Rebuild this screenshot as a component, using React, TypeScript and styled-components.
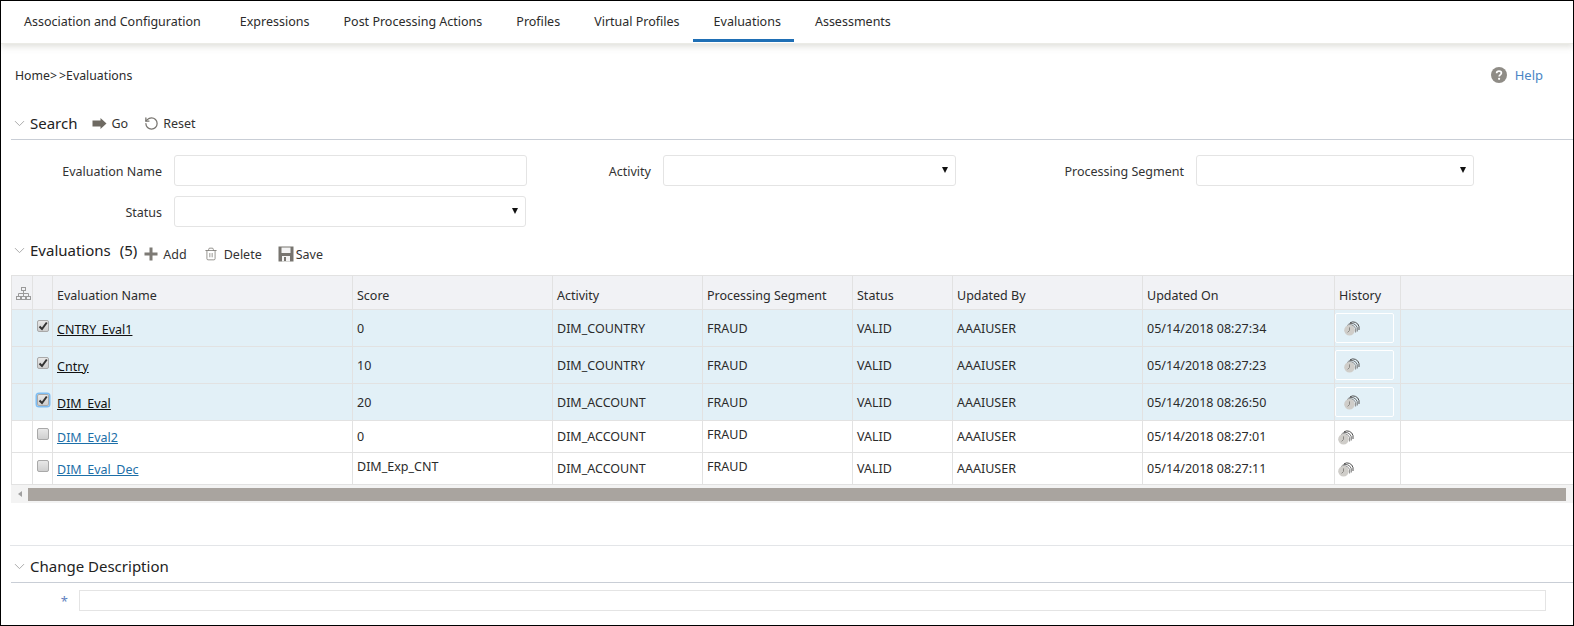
import React from "react";
import styled, { createGlobalStyle } from "styled-components";
import { ChevronDown, RotateCcw, Trash2 } from "lucide-react";

const Global = createGlobalStyle`
  html, body { margin: 0; padding: 0; background: #fff; }
  body { font-family: "Noto Sans", "Open Sans", Arial, sans-serif; color: #2b2b2b; }
  * { box-sizing: border-box; }
`;

const Frame = styled.div`
  width: 1574px;
  height: 626px;
  border: 1px solid #000;
  overflow: hidden;
  background: #fff;
`;
const Tabs = styled.nav`
  height: 43px;
  display: flex;
  padding-left: 2px;
  border-bottom: 1px solid #ebebe6;
  box-shadow: 0 3px 6px rgba(160, 160, 145, 0.3);
`;
const Tab = styled.a<{ $active?: boolean }>`
  height: 41px;
  padding: 12px 13px 0 21px;
  font-size: 12.5px;
  line-height: 17px;
  color: #2b2b2b;
  border-bottom: 3px solid ${(p) => (p.$active ? "#1f6fb5" : "transparent")};
  &:first-child { margin-right: 5px; }
`;
const Crumbs = styled.div`
  display: flex;
  justify-content: space-between;
  align-items: center;
  height: 22px;
  margin-top: 20px;
  padding: 0 30px 0 14px;
  font-size: 12.3px;
`;
const Help = styled.span`
  display: flex;
  align-items: center;
  gap: 8px;
  color: #4a86c5;
  font-size: 13px;
`;
const SectionHead = styled.div<{ $line?: boolean; $top: number; $h: number }>`
  display: flex;
  align-items: center;
  margin: ${(p) => p.$top}px 0 0 10px;
  height: ${(p) => p.$h}px;
  border-bottom: ${(p) => (p.$line ? "1px solid #c9ced6" : "0")};
  color: #8d8d8d;
  svg.chev { margin: 0 2px 0 0; flex: none; }
`;
const SectionTitle = styled.span`
  font-size: 15px;
  color: #222;
`;
const Count = styled.span`
  font-size: 15px;
  color: #222;
  margin-left: 9px;
`;
const Action = styled.span<{ $gap?: number; $left: number; $drop?: boolean }>`
  display: inline-flex;
  align-items: center;
  gap: ${(p) => p.$gap ?? 4}px;
  margin-left: ${(p) => p.$left}px;
  padding-top: ${(p) => (p.$drop ? 8 : 0)}px;
  font-size: 12.5px;
  color: #333;
`;
const FormGrid = styled.div`
  display: grid;
  grid-template-columns: 161px 353px 112px 293px 216px 278px;
  column-gap: 12px;
  row-gap: 10px;
  margin-top: 15px;
  align-items: center;
`;
const Label = styled.label`
  text-align: right;
  font-size: 12.5px;
  padding-top: 2px;
  color: #333;
`;
const TextBox = styled.div`
  height: 31px;
  border: 1px solid #e4e4e4;
  border-radius: 3px;
  background: #fff;
`;
const SelectBox = styled(TextBox)<{ $inset?: number }>`
  position: relative;
  margin-right: ${(p) => p.$inset ?? 0}px;
  &::after {
    content: "";
    position: absolute;
    right: 7px;
    top: 11px;
    border-left: 3px solid transparent;
    border-right: 3px solid transparent;
    border-top: 6px solid #111;
  }
`;
const TableWrap = styled.div`
  margin: 12px 0 0 10px;
`;
const Grid = styled.table`
  width: 1562px;
  table-layout: fixed;
  border-collapse: collapse;
  font-size: 12.5px;
  color: #2b2b2b;
  th, td { border: 1px solid #e2e2e2; padding: 0 4px; text-align: left; font-weight: 400; white-space: nowrap; }
  th { padding-top: 5px; }
  th:last-child, td:last-child { border-right: 0; }
`;
const HeadRow = styled.tr`
  height: 34px;
  background: #f1f2f5;
`;
const Row = styled.tr<{ $sel?: boolean; $h: number }>`
  height: ${(p) => p.$h}px;
  background: ${(p) => (p.$sel ? "#e2f0f7" : "#fff")};
  td { vertical-align: middle; }
`;
const LiftedCell = styled.td<{ $lift?: boolean }>`
  && { padding-bottom: ${(p) => (p.$lift ? 4 : 0)}px; }
`;
const NameLink = styled.a<{ $sel?: boolean }>`
  color: ${(p) => (p.$sel ? "#111" : "#1d6fa8")};
  text-decoration: underline;
  position: relative;
  top: 1px;
`;
const Check = styled.span<{ $focus?: boolean }>`
  display: flex;
  align-items: center;
  justify-content: center;
  width: 12px;
  height: 12px;
  margin: -5px 0 0 0;
  border: 1px solid #a9a9a9;
  border-radius: 2px;
  background: linear-gradient(#e8e8e8, #cfcfcf);
  box-shadow: ${(p) => (p.$focus ? "0 0 0 1.5px #7dbcf2" : "none")};
`;
const HistoryBtn = styled.span<{ $sel?: boolean }>`
  display: flex;
  align-items: center;
  width: 59px;
  height: 30px;
  margin-left: -4px;
  padding: ${(p) => (p.$sel ? "0 0 0 8px" : "2px 0 0 3px")};
  border: ${(p) => (p.$sel ? "1px solid #fff" : "0")};
  border-radius: 2px;
`;
const Scroller = styled.div`
  height: 18px;
  display: flex;
  align-items: center;
  background: #f3f3f3;
`;
const ArrowLeft = styled.span`
  width: 17px;
  display: flex;
  justify-content: center;
  &::before {
    content: "";
    border-top: 3px solid transparent;
    border-bottom: 3px solid transparent;
    border-right: 4px solid #a0a0a0;
  }
`;
const Thumb = styled.span`
  width: 1538px;
  height: 13px;
  background: #a9a49f;
`;
const Divider = styled.div`
  margin: 42px 0 0 9px;
  border-top: 1px solid #e3e5e8;
`;
const DescRow = styled.div`
  display: flex;
  align-items: center;
  margin-top: 7px;
  height: 21px;
`;
const Star = styled.span`
  width: 78px;
  padding-right: 11px;
  text-align: right;
  color: #5f7fc0;
  font-size: 13px;
`;
const DescInput = styled.div`
  width: 1467px;
  height: 21px;
  border: 1px solid #e4e4e4;
`;

const GoIcon = () => (
  <svg width="15" height="11" viewBox="0 0 15 11"><path d="M0.5 2.5H8.5V0L14.5 5.5 8.5 11V8.5H0.5Z" fill="#6e6a62" /></svg>
);
const PlusIcon = () => (
  <svg width="14" height="14" viewBox="0 0 14 14"><path d="M5.5 0.5h3v5h5v3h-5v5h-3v-5h-5v-3h5z" fill="#7d7a75" /></svg>
);
const SaveIcon = () => (
  <svg width="16" height="16" viewBox="0 0 16 16">
    <path d="M0.5 0.5H15.5V15.5H0.5Z" fill="#77746f" />
    <rect x="3.5" y="1.5" width="9" height="5.5" fill="#f4f4f4" />
    <rect x="4" y="10" width="8" height="5.5" fill="#f4f4f4" />
    <rect x="6" y="11" width="2" height="4" fill="#77746f" />
  </svg>
);
const TreeIcon = () => (
  <svg width="15" height="13" viewBox="0 0 15 13" fill="none" stroke="#9a9a9a" strokeWidth="1">
    <rect x="5.5" y="0.5" width="4" height="3" />
    <rect x="0.5" y="9.5" width="4" height="3" />
    <rect x="5.5" y="9.5" width="4" height="3" />
    <rect x="10.5" y="9.5" width="4" height="3" />
    <path d="M7.5 3.5V9.5M2.5 9.5V6.5H12.5V9.5" />
  </svg>
);
const HelpIcon = () => (
  <svg width="16" height="16" viewBox="0 0 16 16">
    <circle cx="8" cy="8" r="8" fill="#8f8c86" />
    <path d="M5.6 6.2C5.7 4.8 6.7 4.1 8 4.1c1.4 0 2.4.8 2.4 2 0 1.8-2.2 1.8-2.2 3.3" fill="none" stroke="#fff" strokeWidth="1.7" />
    <circle cx="8.1" cy="11.8" r="1.1" fill="#fff" />
  </svg>
);
const HistoryIcon = () => (
  <svg width="16" height="15" viewBox="0 0 16 15" fill="none">
    <path d="M6 1.8A6 6 0 0 1 15 5.5V9" stroke="#4f4f4f" strokeWidth="1" />
    <path d="M4.5 3.2A6 6 0 0 1 13.2 6.5V10.5" stroke="#6a6a6a" strokeWidth="1" />
    <path d="M3 4.5A6 6 0 0 1 11.6 7.5V11.5" stroke="#8a8a8a" strokeWidth="1" />
    <circle cx="5.5" cy="9.2" r="5.3" fill="#cfcdc9" />
    <path d="M5.5 6.4V9.5L3.6 11.4" stroke="#8b8985" strokeWidth="1" />
  </svg>
);
const CheckMark = () => (
  <svg width="10" height="10" viewBox="0 0 10 10"><path d="M1.5 5.5L4 8 8.8 1.5" fill="none" stroke="#333" strokeWidth="2" /></svg>
);
const Chev = () => <ChevronDown className="chev" size={17} strokeWidth={1.3} color="#a5a5a5" />;

const tabs = ["Association and Configuration", "Expressions", "Post Processing Actions", "Profiles", "Virtual Profiles", "Evaluations", "Assessments"];
const cols = [21, 20, 300, 200, 150, 150, 100, 190, 192, 66, 173];
const heads = ["Evaluation Name", "Score", "Activity", "Processing Segment", "Status", "Updated By", "Updated On", "History"];
const rows = [
  { name: "CNTRY_Eval1", score: "0", act: "DIM_COUNTRY", on: "05/14/2018 08:27:34", sel: true, h: 37 },
  { name: "Cntry", score: "10", act: "DIM_COUNTRY", on: "05/14/2018 08:27:23", sel: true, h: 37 },
  { name: "DIM_Eval", score: "20", act: "DIM_ACCOUNT", on: "05/14/2018 08:26:50", sel: true, focus: true, h: 37 },
  { name: "DIM_Eval2", score: "0", act: "DIM_ACCOUNT", on: "05/14/2018 08:27:01", h: 32 },
  { name: "DIM_Eval_Dec", score: "DIM_Exp_CNT", act: "DIM_ACCOUNT", on: "05/14/2018 08:27:11", h: 32, liftScore: true },
];

export default function App() {
  return (
    <Frame>
      <Global />
      <Tabs>
        {tabs.map((t) => (
          <Tab key={t} $active={t === "Evaluations"}>{t}</Tab>
        ))}
      </Tabs>
      <Crumbs>
        <span>Home&gt;&thinsp;&gt;Evaluations</span>
        <Help><HelpIcon />Help</Help>
      </Crumbs>
      <SectionHead $line $top={21} $h={33}>
        <Chev />
        <SectionTitle>Search</SectionTitle>
        <Action $left={15}><GoIcon />Go</Action>
        <Action $left={16}><RotateCcw size={15} strokeWidth={2} color="#77746f" />Reset</Action>
      </SectionHead>
      <FormGrid>
        <Label>Evaluation Name</Label>
        <TextBox />
        <Label>Activity</Label>
        <SelectBox />
        <Label>Processing Segment</Label>
        <SelectBox />
        <Label>Status</Label>
        <SelectBox $inset={1} />
      </FormGrid>
      <SectionHead $top={10} $h={26}>
        <Chev />
        <SectionTitle>Evaluations</SectionTitle>
        <Count>(5)</Count>
        <Action $left={7} $gap={5} $drop><PlusIcon />Add</Action>
        <Action $left={17} $gap={6} $drop><Trash2 size={14} strokeWidth={1.3} color="#77746f" />Delete</Action>
        <Action $left={16} $gap={2} $drop><SaveIcon />Save</Action>
      </SectionHead>
      <TableWrap>
        <Grid>
          <colgroup>
            {cols.map((w, i) => <col key={i} style={{ width: w }} />)}
          </colgroup>
          <thead>
            <HeadRow>
              <th><TreeIcon /></th>
              <th />
              {heads.map((h) => <th key={h}>{h}</th>)}
              <th />
            </HeadRow>
          </thead>
          <tbody>
            {rows.map((r) => (
              <Row key={r.name} $sel={r.sel} $h={r.h}>
                <td />
                <td><Check $focus={r.focus}>{r.sel && <CheckMark />}</Check></td>
                <td><NameLink $sel={r.sel}>{r.name}</NameLink></td>
                <LiftedCell $lift={r.liftScore}>{r.score}</LiftedCell>
                <td>{r.act}</td>
                <LiftedCell $lift={!r.sel}>FRAUD</LiftedCell>
                <td>VALID</td>
                <td>AAAIUSER</td>
                <td>{r.on}</td>
                <td><HistoryBtn $sel={r.sel}><HistoryIcon /></HistoryBtn></td>
                <td />
              </Row>
            ))}
          </tbody>
        </Grid>
        <Scroller><ArrowLeft /><Thumb /></Scroller>
      </TableWrap>
      <Divider />
      <SectionHead $line $top={4} $h={33}>
        <Chev />
        <SectionTitle>Change Description</SectionTitle>
      </SectionHead>
      <DescRow>
        <Star>*</Star>
        <DescInput />
      </DescRow>
    </Frame>
  );
}
